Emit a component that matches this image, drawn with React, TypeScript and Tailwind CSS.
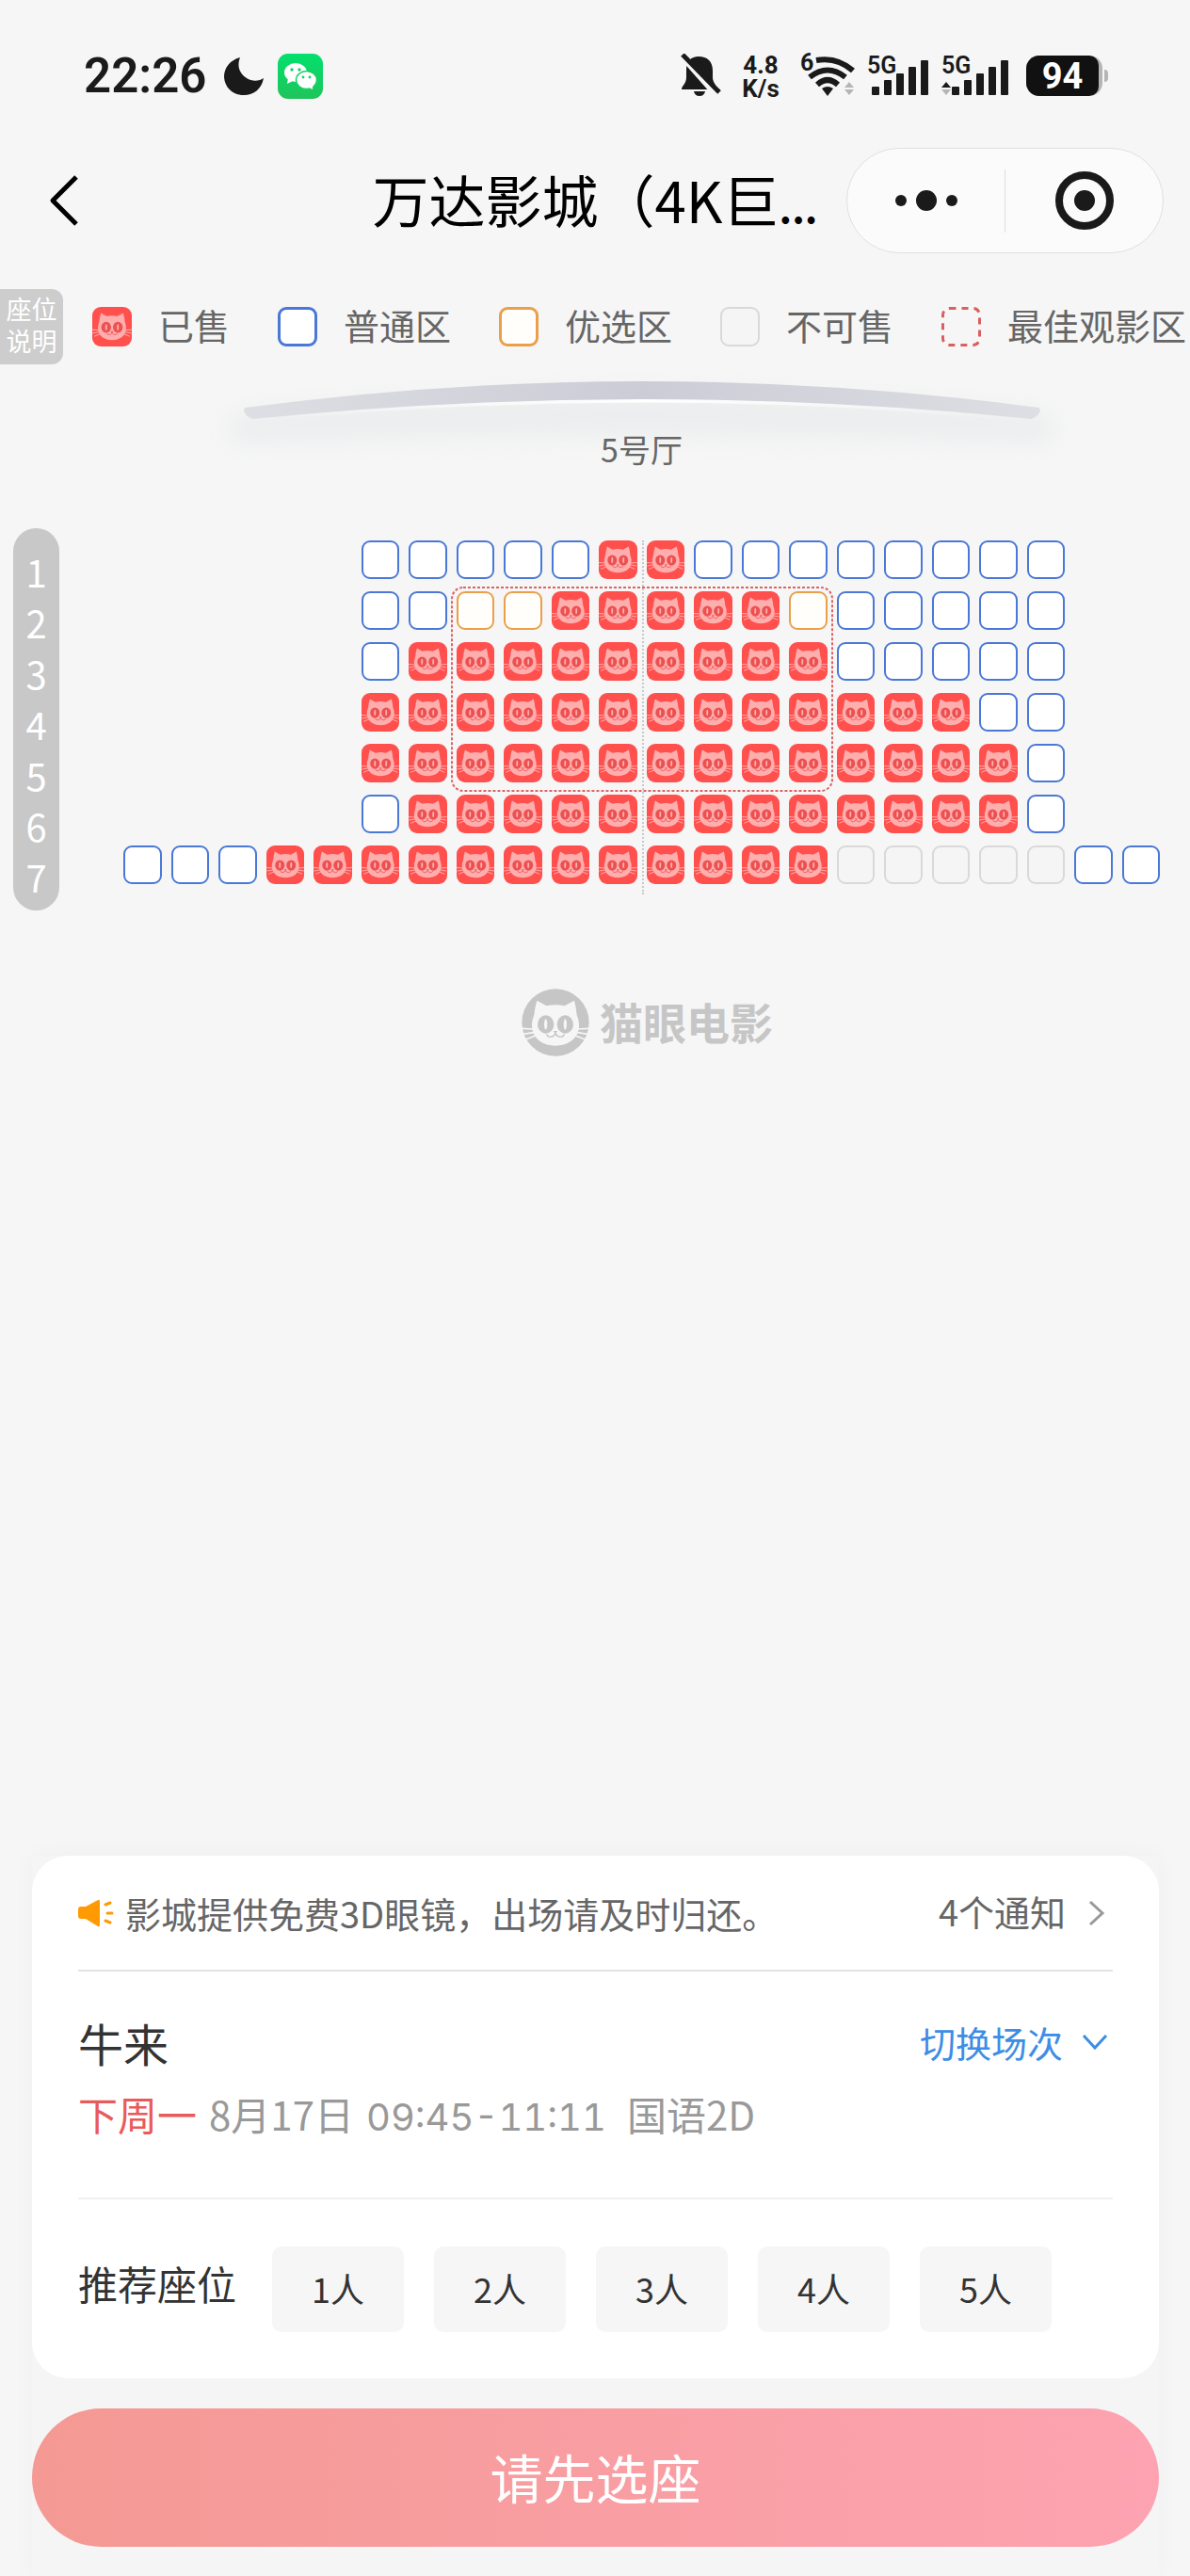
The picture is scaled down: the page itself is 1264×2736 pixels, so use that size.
import clsx from 'clsx';

type SeatKind = 'sold' | 'normal' | 'prime' | 'closed';

const SEAT_CODES: Record<string, SeatKind> = {
  x: 'sold',
  o: 'normal',
  p: 'prime',
  n: 'closed',
};

// one character per column, '.' is an empty spot
const ROWS = [
  '.....oooooxxoooooooo..',
  '.....ooppxxxxxpooooo..',
  '.....oxxxxxxxxxooooo..',
  '.....xxxxxxxxxxxxxoo..',
  '.....xxxxxxxxxxxxxxo..',
  '.....oxxxxxxxxxxxxxo..',
  'oooxxxxxxxxxxxxnnnnnoo',
];

const SEAT_LABELS: Record<SeatKind, string> = {
  sold: '已售',
  normal: '普通区',
  prime: '优选区',
  closed: '不可售',
};

const LEGEND: SeatKind[] = ['sold', 'normal', 'prime', 'closed'];

function CatFace({ face, ground }: { face: string; ground: string }) {
  return (
    <g>
      <g stroke={face} strokeWidth="5" fill="none">
        <path d="M1 127 L40 129 M5 145 L42 139 M14 162 L46 149" />
        <path d="M215 127 L176 129 M211 145 L174 139 M202 162 L170 149" />
      </g>
      <path
        fill={face}
        d="M49 38 L79 55 Q108 49 137 55 L168 38 Q174 60 176 84 Q186 108 182 130 C176 163 146 182 108 182 C70 182 40 163 34 130 Q30 108 40 84 Q42 60 49 38 Z"
      />
      <ellipse cx="77" cy="114" rx="26" ry="29" fill={ground} />
      <ellipse cx="139" cy="114" rx="26" ry="29" fill={ground} />
      <ellipse cx="77" cy="114" rx="5" ry="17" fill={face} />
      <ellipse cx="139" cy="114" rx="5" ry="17" fill={face} />
      <path d="M101 135 h14 l-7 8 z" fill={ground} />
      <path d="M80 145 Q82 154 92 154 Q105 153 108 141 Q111 153 124 154 Q134 154 136 145" fill="none" stroke={ground} strokeWidth="4" />
    </g>
  );
}

function Seat({ kind, small }: { kind: SeatKind; small?: boolean }) {
  return (
    <span
      className={clsx(
        'block h-full w-full overflow-hidden rounded-[9px]',
        kind === 'sold' && 'bg-[#ff504e]',
        kind === 'normal' && 'border-[#4a78d6] bg-white',
        kind === 'prime' && 'border-[#eaa04a] bg-[#fffefa]',
        kind === 'closed' && 'border-[#d9d9d9] bg-[#f5f5f5]',
        kind !== 'sold' && (small || kind === 'closed' ? 'border-2' : 'border-3'),
      )}
    >
      {kind === 'sold' && (
        <svg viewBox="3 6 210 210" className="h-full w-full" aria-hidden="true">
          <CatFace face="#ffaeae" ground="#ec5151" />
        </svg>
      )}
    </span>
  );
}

function Signal({ active }: { active?: boolean }) {
  const offset = active ? 11 : 5;
  return (
    <div className="relative pt-[7px]">
      <span className="absolute -top-[2px] left-0 text-[25px] leading-[30px] font-semibold">5G</span>
      <svg width={offset + 61} height="37" viewBox={`0 7 ${offset + 61} 37`} fill="#1a1a1a" aria-hidden="true">
        {[0, 1, 2, 3, 4].map((i) => (
          <rect key={i} x={offset + i * 13} y={35 - i * 7} width="8" height={9 + i * 7} rx="1" />
        ))}
        {active && <path d="M0 36 l5 -6 l5 6 z" />}
        {active && <path d="M0 38 l5 6 l5 -6 z" fill="#b5b5b5" />}
      </svg>
    </div>
  );
}

function StatusBar() {
  return (
    <div className="flex h-[157px] items-start justify-between pt-[57px] pr-[87px] pl-[89px] font-['Roboto',sans-serif] text-[#1a1a1a]">
      <div className="flex h-12 items-center">
        <span className="text-[51px] leading-[48px] font-semibold">22:26</span>
        <svg width="42" height="42" viewBox="0 0 42 42" className="ml-[19px]" aria-hidden="true">
          <path d="M17 1 C6 4 0 12 0 22 C1 34 10 41 21 41 C32 41 40 34 42 23 C38 26 30 27 24 23 C15 17 14 9 17 1 Z" fill="#1a1a1a" />
        </svg>
        <svg width="48" height="48" viewBox="0 0 48 48" className="ml-[15px]" aria-hidden="true">
          <defs>
            <linearGradient id="wechat" x1="0" y1="0" x2="0" y2="1">
              <stop offset="0" stopColor="#03e06d" />
              <stop offset="1" stopColor="#1fc45b" />
            </linearGradient>
          </defs>
          <rect width="48" height="48" rx="11" fill="url(#wechat)" />
          <path d="M11 26 l-1 6 l6 -3 z" fill="#fff" />
          <ellipse cx="19" cy="20" rx="12" ry="10" fill="#fff" />
          <ellipse cx="30.500" cy="28" rx="11" ry="9.500" fill="#fff" stroke="#12d365" strokeWidth="1.500" />
          <path d="M32 35 l5 3 l0 -6 z" fill="#fff" />
          <g fill="#12d365">
            <circle cx="15" cy="17" r="1.700" />
            <circle cx="23" cy="17" r="1.700" />
            <circle cx="27" cy="25" r="1.400" />
            <circle cx="34" cy="25" r="1.400" />
          </g>
        </svg>
      </div>
      <div className="flex h-12 items-start">
        <svg width="44" height="45" viewBox="0 0 44 45" aria-hidden="true">
          <path d="M6 17 C6 8 11 3 19 3 C28 3 34 8 34 18 V25 C34 30 37 32 39 38 H1 C1 34 6 32 6 25 Z" fill="#1a1a1a" />
          <path d="M14 40 h12 q-1 5 -6 5 q-5 0 -6 -5 z" fill="#1a1a1a" />
          <path d="M-1 1 L37 44" stroke="#f6f6f6" strokeWidth="5" />
          <path d="M2 1 L41 41" stroke="#1a1a1a" strokeWidth="5" />
        </svg>
        <div className="ml-[18px] flex w-[46px] flex-col text-center text-[26px] leading-[25px] font-bold">
          <span>4.8</span>
          <span>K/s</span>
        </div>
        <div className="relative ml-[19px]">
          <span className="absolute -top-[2px] left-0 text-[25px] leading-[24px] font-bold">6</span>
          <svg width="58" height="45" viewBox="0 0 58 45" aria-hidden="true">
            <g fill="none" stroke="#1a1a1a" strokeWidth="6">
              <path d="M17 7 Q39 3 56 18" />
              <path d="M10 25 Q29 10 48 25" />
              <path d="M18 33 Q29 23 40 33" />
            </g>
            <path d="M23 37 Q29 33 35 37 L29 45 Z" fill="#1a1a1a" />
            <path d="M47 36 l5 -6 l5 6 z M47 38 l5 6 l5 -6 z" fill="#b5b5b5" />
          </svg>
        </div>
        <div className="ml-[13px]"><Signal /></div>
        <div className="ml-[13px]"><Signal active /></div>
        <div className="mt-[2px] ml-[18px] flex items-center">
          <div className="h-[43px] w-[81px] overflow-hidden rounded-[14px] bg-[#b5b5b5]">
            <div className="h-full w-[77px] rounded-r-[10px] bg-[#111] text-center text-[38px] leading-[45px] font-bold text-white">94</div>
          </div>
          <div className="ml-[2px] h-[13px] w-1 rounded-r-full bg-[#b5b5b5]" />
        </div>
      </div>
    </div>
  );
}

function NavBar() {
  return (
    <header className="grid h-[112px] grid-cols-[1fr_auto_1fr] items-center">
      <button type="button" aria-label="返回" className="ml-[51px] w-fit">
        <svg width="34" height="56" viewBox="0 0 34 56" fill="none" stroke="#000" strokeWidth="5" aria-hidden="true">
          <path d="M30 3 L5 28 L30 53" strokeLinejoin="round" />
        </svg>
      </button>
      <h1 className="pt-1 text-[60px] leading-[72px] whitespace-nowrap text-black">
        万达影城（4K巨<span className="text-[42px] font-bold">...</span>
      </h1>
      <div className="mr-7 flex h-[112px] w-[337px] items-center justify-self-end rounded-full border border-[#e0e0e0] bg-[#fbfbfb]">
        <button type="button" aria-label="更多" className="flex flex-1 items-center justify-center gap-[10px]">
          <span className="h-3 w-3 rounded-full bg-[#1a1a1a]" />
          <span className="h-[22px] w-[22px] rounded-full bg-[#1a1a1a]" />
          <span className="h-3 w-3 rounded-full bg-[#1a1a1a]" />
        </button>
        <span className="h-[67px] w-px bg-[#dedede]" />
        <button type="button" aria-label="关闭" className="flex flex-1 justify-center">
          <span className="flex h-[62px] w-[62px] items-center justify-center rounded-full border-[8px] border-[#1a1a1a]">
            <span className="h-[22px] w-[22px] rounded-full bg-[#1a1a1a]" />
          </span>
        </button>
      </div>
    </header>
  );
}

function Legend() {
  return (
    <div className="mt-[38px] flex h-20 items-center overflow-hidden">
      <div className="flex h-20 w-[67px] shrink-0 items-center justify-center rounded-r-xl bg-[#cdcdcd] pb-1 text-center text-[27px] leading-[34px] text-white">
        座位
        <br />
        说明
      </div>
      <ul className="ml-[31px] flex gap-[51px] text-[38px] leading-[42px] whitespace-nowrap text-[#666]">
        {LEGEND.map((kind) => (
          <li key={kind} className="flex items-center gap-7">
            <span className="h-[42px] w-[42px]">
              <Seat kind={kind} />
            </span>
            <span className="pb-1">{SEAT_LABELS[kind]}</span>
          </li>
        ))}
        <li className="flex items-center gap-7">
          <svg width="42" height="42" viewBox="0 0 42 42" aria-hidden="true">
            <rect x="1.500" y="1.500" width="39" height="39" rx="7" fill="none" stroke="#d9605f" strokeWidth="3" strokeDasharray="7 6" />
          </svg>
          <span className="pb-1">最佳观影区</span>
        </li>
      </ul>
    </div>
  );
}

function Screen() {
  return (
    <svg viewBox="0 0 913 56" className="mx-auto w-[83%] overflow-visible" aria-hidden="true">
      <defs>
        <linearGradient id="screen" x1="0" y1="0" x2="1" y2="0">
          <stop offset="0" stopColor="#dedfe4" />
          <stop offset="0.500" stopColor="#cbccd5" />
          <stop offset="1" stopColor="#dedfe4" />
        </linearGradient>
        <linearGradient id="shine" x1="0" y1="0" x2="1" y2="0">
          <stop offset="0" stopColor="#fff" stopOpacity="0" />
          <stop offset="0.500" stopColor="#fff" />
          <stop offset="1" stopColor="#fff" stopOpacity="0" />
        </linearGradient>
        <filter id="haze" x="-10%" y="-60%" width="120%" height="260%">
          <feGaussianBlur stdDeviation="13" />
        </filter>
      </defs>
      <path d="M20 36 Q457 -10 893 36 V66 Q457 50 20 66 Z" fill="#ebedee" filter="url(#haze)" />
      <path d="M44 41 Q457 0 868 41" fill="none" stroke="url(#shine)" strokeWidth="4" />
      <path d="M35 28 Q457 -28 878 28 Q882 34 870 40 Q457 -2 43 40 Q31 34 35 28 Z" fill="url(#screen)" />
    </svg>
  );
}

function SeatMap() {
  return (
    <main className="mt-[18px] flex">
      <div className="w-[131px] shrink-0 pt-[156px] pl-[14px]">
        <ol className="w-[49px] rounded-full bg-[#c8c8c8] pt-[19px] pb-[9px] text-center text-[40px] leading-[54px] text-white">
          {ROWS.map((row, i) => (
            <li key={row}>{i + 1}</li>
          ))}
        </ol>
      </div>
      <div className="mr-8 min-w-0 flex-1">
        <Screen />
        <p className="text-center text-[34px] leading-[32px] text-[#666]">5号厅</p>
        <div className="relative mt-[81px]">
          <div className="grid grid-cols-22 gap-x-[10px] gap-y-[13px]">
            {ROWS.map((row, r) =>
              row.split('').map((code, c) =>
                code === '.' ? (
                  <span key={`${r}-${c}`} />
                ) : (
                  <button
                    key={`${r}-${c}`}
                    type="button"
                    disabled={code === 'x' || code === 'n'}
                    aria-label={`${r + 1}排${c + 1}座 ${SEAT_LABELS[SEAT_CODES[code]]}`}
                    className="h-[41px]"
                  >
                    <Seat kind={SEAT_CODES[code]} small />
                  </button>
                ),
              ),
            )}
          </div>
          {/* recommended area and centre line */}
          <div className="pointer-events-none absolute inset-0 grid grid-cols-22 grid-rows-7 gap-x-[10px] gap-y-[13px]">
            <div className="col-start-8 col-end-16 row-start-2 row-end-6 -mx-[5px] -mt-[4px] -mb-[9px]">
              <svg width="100%" height="100%" className="block overflow-visible" aria-hidden="true">
                <rect x="0" y="0" width="100%" height="100%" rx="12" fill="none" stroke="#dc6464" strokeWidth="2" strokeDasharray="3 2" />
              </svg>
            </div>
          </div>
          <div className="pointer-events-none absolute top-0 -bottom-[11px] left-1/2 border-l-2 border-dotted border-[#c9c9c9]" />
        </div>
        <div className="mt-[111px] flex items-center justify-center gap-[11px] pl-3 text-[#c6c6c6]">
          <svg width="72" height="72" viewBox="0 0 216 216" aria-hidden="true">
            <circle cx="108" cy="108" r="107" fill="#c6c6c6" />
            <CatFace face="#f6f6f6" ground="#c6c6c6" />
          </svg>
          <span className="pb-1 text-[46px] leading-[68px] font-bold">猫眼电影</span>
        </div>
      </div>
    </main>
  );
}

function BookingPanel() {
  return (
    <footer className="mt-auto mr-[33px] ml-[34px] bg-[#f5f5f5] pb-[31px] shadow-[0_0_24px_rgba(0,0,0,0.03)]">
      <section className="rounded-[38px] bg-white px-[49px]">
        <div className="flex h-[123px] items-center border-b-2 border-[#e3e3e3] text-[38px] leading-[52px] text-[#666]">
          <svg width="38" height="30" viewBox="0 0 38 30" className="shrink-0" aria-hidden="true">
            <path d="M0 11 Q0 8 3 8 L8 8 L21 1 Q23 0 23 3 V27 Q23 30 21 29 L8 21 L3 21 Q0 21 0 18 Z" fill="#ff9a03" />
            <path d="M29 6 L34 4 M31 15 H36 M29 23 L34 25" stroke="#ff9a03" strokeWidth="3" strokeLinecap="round" />
          </svg>
          <p className="ml-3 flex-1">影城提供免费3D眼镜，出场请及时归还。</p>
          <button type="button" className="flex items-center gap-6 pr-2">
            <span className="pb-1">4个通知</span>
            <svg width="18" height="28" viewBox="0 0 18 28" fill="none" stroke="#999" strokeWidth="3" aria-hidden="true">
              <path d="M2 2 L15 14 L2 26" />
            </svg>
          </button>
        </div>
        <div className="border-b-2 border-[#f0f0f0] pt-[49px] pb-[63px]">
          <div className="flex items-center justify-between">
            <h2 className="text-[48px] leading-[52px] text-[#333]">牛来</h2>
            <button type="button" className="flex items-center gap-5 pr-[5px] text-[38px] leading-[52px] text-[#3d8de6]">
              切换场次
              <svg width="28" height="18" viewBox="0 0 28 18" fill="none" stroke="currentColor" strokeWidth="3" aria-hidden="true">
                <path d="M2 2 L14 15 L26 2" />
              </svg>
            </button>
          </div>
          <p className="mt-6 flex items-baseline text-[42px] leading-[52px] text-[#999]">
            <span className="mr-[13px] text-[#e95b5a]">下周一</span>
            <span>8月17日</span>
            <span className="ml-[13px] font-['Inter','Noto_Sans_CJK_SC',sans-serif] text-[40px] leading-[40px] tabular-nums">09:45-11:11</span>
            <span className="ml-[22px]">国语2D</span>
          </p>
        </div>
        <div className="flex gap-[38px] pt-[50px] pb-[49px] text-[#333]">
          <span className="text-[42px] leading-[78px]">推荐座位</span>
          <div className="flex gap-8">
            {[1, 2, 3, 4, 5].map((n) => (
              <button key={n} type="button" className="h-[91px] w-[140px] rounded-[10px] bg-[#f6f6f6] pb-1 text-[36px] leading-[52px]">
                {n}人
              </button>
            ))}
          </div>
        </div>
      </section>
      <button type="button" className="mt-8 h-[147px] w-full rounded-full bg-linear-to-r from-[#f49993] to-[#fda3b1] pb-1 text-[56px] leading-[72px] text-white">
        请先选座
      </button>
    </footer>
  );
}

export default function App() {
  return (
    <div className="flex min-h-screen flex-col overflow-hidden bg-[#f6f6f6] font-['Noto_Sans_CJK_SC',sans-serif]">
      <StatusBar />
      <NavBar />
      <Legend />
      <SeatMap />
      <BookingPanel />
    </div>
  );
}
